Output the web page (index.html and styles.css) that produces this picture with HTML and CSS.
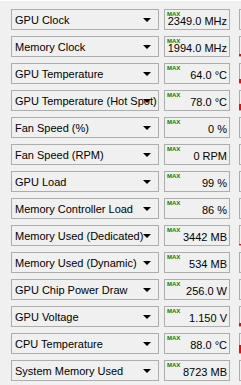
FILE: index.html
```html
<!DOCTYPE html>
<html lang="en">
<head>
  <meta charset="UTF-8">
  <title>Sensors</title>
  <link rel="stylesheet" href="styles.css">
</head>
<body>
  <div class="page">
    <div id="sensorList" class="sensors"></div>
  </div>

  <script>
    const sensors = [
      { name: 'GPU Clock', value: '2349.0 MHz', plot: 0 },
      { name: 'Memory Clock', value: '1994.0 MHz', plot: 2 },
      { name: 'GPU Temperature', value: '64.0 °C', plot: 4 },
      { name: 'GPU Temperature (Hot Spot)', value: '78.0 °C', plot: 6 },
      { name: 'Fan Speed (%)', value: '0 %', plot: 0 },
      { name: 'Fan Speed (RPM)', value: '0 RPM', plot: 0 },
      { name: 'GPU Load', value: '99 %', plot: 0 },
      { name: 'Memory Controller Load', value: '86 %', plot: 0 },
      { name: 'Memory Used (Dedicated)', value: '3442 MB', plot: 1 },
      { name: 'Memory Used (Dynamic)', value: '534 MB', plot: 0 },
      { name: 'GPU Chip Power Draw', value: '256.0 W', plot: 0 },
      { name: 'GPU Voltage', value: '1.150 V', plot: 3 },
      { name: 'CPU Temperature', value: '88.0 °C', plot: 8 },
      { name: 'System Memory Used', value: '8723 MB', plot: 0 }
    ];

    const list = document.getElementById('sensorList');
    list.innerHTML = sensors.map(s => `
      <div class="row">
        <div class="combo">
          <span class="combo-text">${s.name}</span>
          <span class="combo-arrow"></span>
        </div>
        <div class="reading">
          <span class="max">MAX</span>
          <span class="value">${s.value}</span>
        </div>
        <div class="graph">
          ${s.plot ? `<span class="plot" style="height:${s.plot}px"></span>` : ''}
        </div>
      </div>
    `).join('');
  </script>
</body>
</html>
```

FILE: styles.css
```css
* { box-sizing: border-box; margin: 0; padding: 0; }
body {
  background: #f0f0f0;
  font-family: 'Liberation Sans', Arial, sans-serif;
  font-size: 11px;
  color: #000;
  overflow: hidden;
}
.page {
  width: 241px;
  height: 385px;
  border-top: 1px solid #fff;
  padding: 8px 0 0 11px;
  overflow: hidden;
}
.sensors {
  display: flex;
  flex-direction: column;
  gap: 6px;
}
.row {
  display: flex;
  align-items: stretch;
  height: 21px;
  width: 230px;
}
.combo {
  width: 148px;
  border: 1px solid #adadad;
  background: #f0f0f0;
  display: flex;
  align-items: center;
  padding-left: 3px;
  position: relative;
  overflow: hidden;
}
.combo-text {
  white-space: nowrap;
  flex: 1;
  overflow: hidden;
}
.combo-arrow {
  position: absolute;
  right: 7px;
  top: 8px;
  width: 0;
  height: 0;
  border-left: 4px solid transparent;
  border-right: 4px solid transparent;
  border-top: 4px solid #000;
}
.reading {
  width: 66px;
  margin-left: 5px;
  border: 1px solid #adadad;
  position: relative;
  display: flex;
  align-items: center;
  justify-content: flex-end;
  padding-right: 2px;
}
.max {
  position: absolute;
  left: 2px;
  top: 1px;
  font-size: 6px;
  font-weight: bold;
  color: #008000;
  line-height: 6px;
}
.value {
  position: relative;
  white-space: nowrap;
  padding-top: 2px;
}
.graph {
  flex: 1;
  margin-left: 9px;
  border: 1px solid #adadad;
  border-right: none;
  position: relative;
}
.plot {
  position: absolute;
  right: 0;
  bottom: 0;
  width: 2px;
  background: #ff0000;
}
```
